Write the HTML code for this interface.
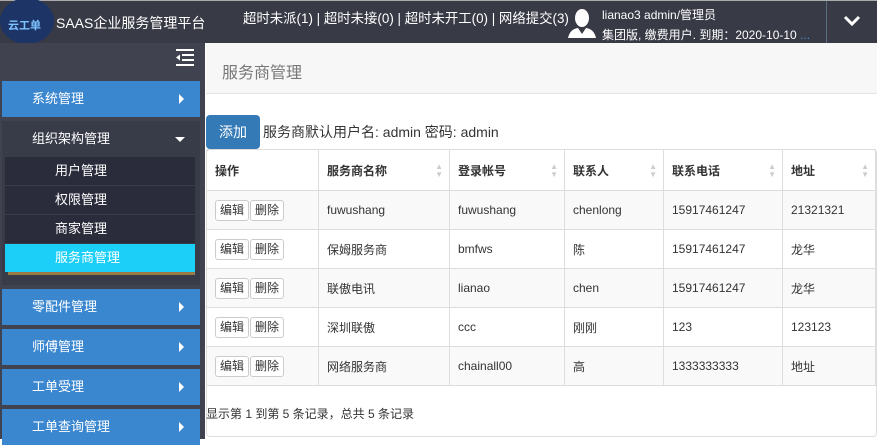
<!DOCTYPE html>
<html><head><meta charset="utf-8"><style>
*{box-sizing:border-box;margin:0;padding:0}
body{width:877px;height:439px;overflow:hidden;background:#fff;font-family:"Liberation Sans","Noto Sans CJK SC",sans-serif;font-size:13px;color:#333;position:relative}
.hdr{position:absolute;left:0;top:0;width:877px;height:43px;background:#383a46;border-top:1px solid #aaa;color:#fff}
.logo{position:absolute;left:0;top:-3px;width:54px;height:46px;border-radius:50%;background:#1c3466;}
.logo span{position:absolute;left:8px;top:19px;font-size:11px;color:#7fc3ff;font-weight:bold}
.side{position:absolute;left:0;top:43px;width:205px;height:396px;background:#40434f}
.mi{position:absolute;left:2px;width:198px;height:36px;background:#3a87d0;color:#fff;font-size:13px;line-height:36px;padding-left:30px}
.mi:after{content:"";position:absolute;right:16px;top:13px;border-left:5px solid #fff;border-top:5px solid transparent;border-bottom:5px solid transparent}
.sub{position:absolute;left:5px;width:190px;height:28px;background:#2a2c3b;color:#fff;line-height:28px;padding-left:50px;font-size:13px}
table{border-collapse:collapse;position:absolute;left:206px;top:149px;width:670px}
td,th{border:1px solid #ddd;height:39px;padding-left:8px;text-align:left;font-size:12px;color:#333}
th{height:41px;font-weight:bold;position:relative}
th.s:after{content:"▲\A▼";white-space:pre;position:absolute;right:6px;top:13px;font-size:8px;line-height:8px;color:#ccc}
tr:nth-child(even) td{background:#f9f9f9}
.b{display:inline-block;border:1px solid #ccc;border-radius:3px;padding:0 4px;height:21px;line-height:19px;font-size:12px;background:#fff;margin-right:1px}
</style></head><body>
<div class="hdr">
 <div class="logo"><span>云工单</span></div>
 <div style="position:absolute;left:56px;top:12px;font-size:14px">SAAS企业服务管理平台</div>
 <div style="position:absolute;left:243px;top:6px;font-size:13.4px;white-space:nowrap">超时未派(1) | 超时未接(0) | 超时未开工(0) | 网络提交(3)</div>
 <svg style="position:absolute;left:567px;top:7px" width="30" height="30" viewBox="0 0 30 30"><ellipse cx="15" cy="10" rx="7" ry="9" fill="#fff"/><path d="M1 30 Q3 21 11 20 L15 26 L19 20 Q27 21 29 30Z" fill="#fff"/></svg>
 <div style="position:absolute;left:602px;top:5px;font-size:12px">lianao3 admin/管理员</div>
 <div style="position:absolute;left:602px;top:25px;font-size:12px">集团版, 缴费用户. 到期：2020-10-10 <span style="color:#4a8ee0">...</span></div>
 <div style="position:absolute;left:826px;top:0;width:51px;height:43px;border-left:1px solid #5a6e80"></div>
 <svg style="position:absolute;left:843px;top:14px" width="18" height="12"><path d="M2 2 L9 9 L16 2" stroke="#fff" stroke-width="3" fill="none"/></svg>
</div>
<div class="side">
 <svg style="position:absolute;left:175px;top:5px" width="20" height="20"><path d="M1 2H19M7 7H19M7 12H19M1 17H19" stroke="#fff" stroke-width="2"/><path d="M1 9.5L5 6.5V12.5Z" fill="#fff"/></svg>
</div>
<div class="mi" style="top:81px">系统管理</div>
<div style="position:absolute;left:2px;top:121px;width:198px;height:164px;background:#383b48"></div>
<div style="position:absolute;left:2px;top:121px;width:198px;height:36px;color:#fff;line-height:36px;padding-left:30px">组织架构管理</div>
<div style="position:absolute;left:175px;top:137px;border-top:5px solid #fff;border-left:5px solid transparent;border-right:5px solid transparent"></div>
<div class="sub" style="top:157px">用户管理</div>
<div class="sub" style="top:186px">权限管理</div>
<div class="sub" style="top:215px">商家管理</div>
<div class="sub" style="top:244px;background:#1ccff9">服务商管理</div>
<div style="position:absolute;left:8px;top:272px;width:187px;height:3px;background:#9a7a45"></div>
<div class="mi" style="top:289px">零配件管理</div>
<div class="mi" style="top:329px">师傅管理</div>
<div class="mi" style="top:369px">工单受理</div>
<div class="mi" style="top:409px">工单查询管理</div>
<div style="position:absolute;left:206px;top:43px;width:671px;height:51px;background:#f7f7f7;border-bottom:1px solid #e5e5e5"></div>
<div style="position:absolute;left:222px;top:59px;font-size:16px;color:#777">服务商管理</div>
<div style="position:absolute;left:206px;top:115px;width:54px;height:34px;background:#337ab7;border-radius:4px;color:#fff;font-size:14px;line-height:34px;text-align:center">添加</div>
<div style="position:absolute;left:263px;top:122px;font-size:14px">服务商默认用户名: admin 密码: admin</div>
<div style="position:absolute;left:206px;top:149px;width:671px;height:288px;border:1px solid #ddd;border-radius:4px"></div>
<table>
<tr><th style="width:112px">操作</th><th class="s" style="width:131px">服务商名称</th><th class="s" style="width:115px">登录帐号</th><th class="s" style="width:99px">联系人</th><th class="s" style="width:119px">联系电话</th><th class="s">地址</th></tr>
<tr><td><span class="b">编辑</span><span class="b">删除</span></td><td>fuwushang</td><td>fuwushang</td><td>chenlong</td><td>15917461247</td><td>21321321</td></tr>
<tr><td><span class="b">编辑</span><span class="b">删除</span></td><td>保姆服务商</td><td>bmfws</td><td>陈</td><td>15917461247</td><td>龙华</td></tr>
<tr><td><span class="b">编辑</span><span class="b">删除</span></td><td>联傲电讯</td><td>lianao</td><td>chen</td><td>15917461247</td><td>龙华</td></tr>
<tr><td><span class="b">编辑</span><span class="b">删除</span></td><td>深圳联傲</td><td>ccc</td><td>刚刚</td><td>123</td><td>123123</td></tr>
<tr><td><span class="b">编辑</span><span class="b">删除</span></td><td>网络服务商</td><td>chainall00</td><td>高</td><td>1333333333</td><td>地址</td></tr>
</table>
<div style="position:absolute;left:206px;top:405px;font-size:12px">显示第 1 到第 5 条记录，总共 5 条记录</div>
</body></html>
